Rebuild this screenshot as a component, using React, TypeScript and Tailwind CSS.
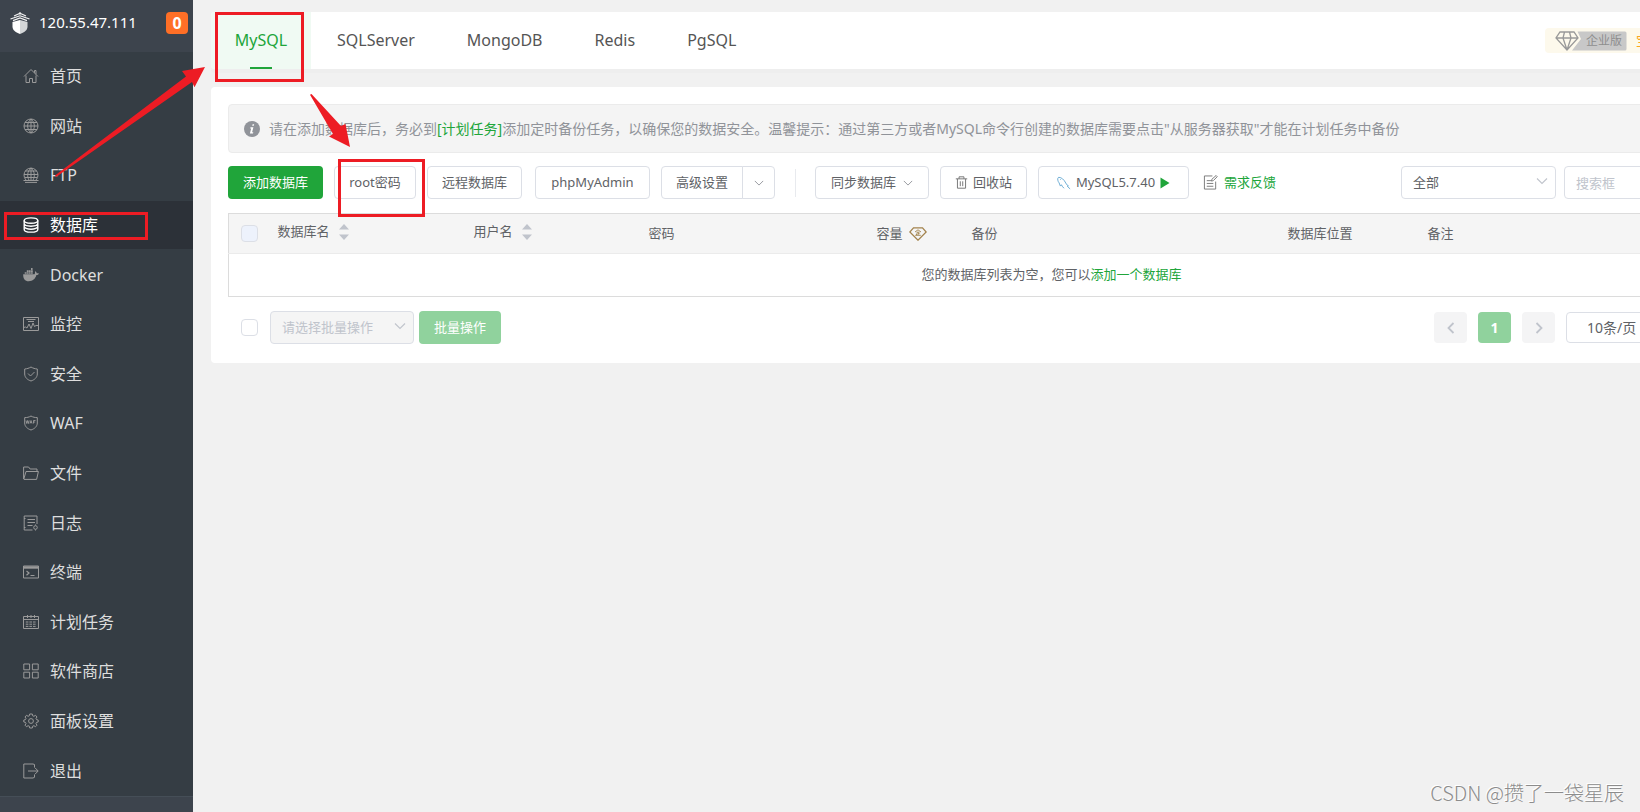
import React from "react";

type IconProps = { children: React.ReactNode; size?: string; color?: string };

function Icon({ children, size = "size-4", color = "text-[#9a9a9a]" }: IconProps) {
  return (
    <svg viewBox="0 0 16 16" className={`${size} ${color} shrink-0`} fill="none" stroke="currentColor" strokeWidth="1" aria-hidden="true">
      {children}
    </svg>
  );
}

const nav: { label: string; icon: React.ReactNode; active?: boolean }[] = [
  { label: "首页", icon: <path d="M1 8.5 8 1.5l7 7M11.5 4.8V2.5h1.5v3.8M3 7.5v7h3.5v-4h3v4H13v-7" /> },
  { label: "网站", icon: <><circle cx="8" cy="8" r="7" /><path d="M8 1v14M1 8h14M2 4.5h12M2 11.5h12" /><path d="M8 1C3.5 5 3.5 11 8 15M8 1c4.500 4 4.500 10 0 14" /></> },
  { label: "FTP", icon: <><path d="M3 13A7 7 0 1 1 13 13M8 .8v12.500M1 7.500h14M2.200 4h11.600M2 10.500h12M8 1C4 4.500 4 10 6 13M8 1c4 3.500 4 9 2 12" /><path d="M.5 13.500h15M2 15.400h12" /></> },
  { label: "数据库", active: true, icon: <g strokeWidth="1.400"><ellipse cx="8" cy="3.600" rx="6.800" ry="2.700" /><path d="M1.200 3.600v8.800c0 1.500 3 2.700 6.800 2.700s6.800-1.200 6.800-2.700V3.600M1.200 6.600C1.200 8 4.200 9.200 8 9.200s6.800-1.200 6.800-2.600M1.200 9.500c0 1.400 3 2.700 6.800 2.700s6.800-1.300 6.800-2.700" /></g> },
  { label: "Docker", icon: <path stroke="none" fill="currentColor" d="M.2 7.200h11.300c.5-.4.700-1.300.4-2.400l.6-.6c.8.600 1.200 1.300 1.200 2 .8-.1 1.600 0 2.200.400-.4 1.100-1.400 1.500-2.500 1.500C12.300 12 9.700 14.300 5.700 14.300 2 14.300 0 11.500.2 7.200ZM1.700 5.200h1.800v1.600H1.700zM3.800 5.200h1.800v1.600H3.800zM5.900 5.200h1.800v1.600H5.900zM8 5.200h1.800v1.600H8zM3.800 3.300h1.800v1.600H3.800zM5.900 3.300h1.800v1.600H5.900zM8 3.300h1.800v1.600H8zM8 1h1.600v2H8z" /> },
  { label: "监控", icon: <><path d="M.5 1.500h15v13H.5zM3.500 3.500h9M5 5.500h6" /><path d="m.5 11.500 2-.5 1.500 1L6 8l2 4.500L10 7l1.500 3.500 1.500-1h2" /></> },
  { label: "安全", icon: <><path d="M8 1c2 1.200 4 1.800 6.300 2v5c0 3.500-2.800 5.800-6.300 7-3.500-1.200-6.300-3.500-6.300-7V3C4 2.800 6 2.200 8 1Z" /><path d="m5 7.500 2.500 2.500 4-4" /></> },
  { label: "WAF", icon: <><path d="M8 1c2 1.200 4 1.600 6.300 1.600V8c0 3.500-2.800 5.800-6.300 7-3.500-1.200-6.300-3.500-6.300-7V2.600C4 2.600 6 2.200 8 1Z" /><path strokeWidth=".9" d="m3 5.500.8 3 .8-3 .8 3 .8-3M7 8.500l1-3 1 3M7.300 7.500h1.400M10.500 8.500v-3h2M10.500 7h1.700" /></> },
  { label: "文件", icon: <><path d="M.6 14V2h5l1.500 2H14v2" /><path d="M.8 14 3 6.500h12.400L13.600 14.400H.8" /></> },
  { label: "日志", icon: <><path d="M14 9V1H1.200v14h8.300M1 3.500h1.500M1 12.500h1.500M4.500 4.500H12M4.500 7.500H12M4.500 10.500h5" /><circle cx="12.500" cy="12.500" r="1.800" /><path d="M12.500 9.500v1M12.500 14.500v1" /></> },
  { label: "终端", icon: <><path d="M.5 2h15v12H.5z" /><path d="M.5 3.500h15" strokeWidth="2.400" /><path strokeWidth="1.200" d="m3.500 7 2.500 2-2.500 2.300M7.500 11.500h4" /></> },
  { label: "计划任务", icon: <><path d="M.5 2.500h15v12H.5zM.5 5.500h15M4.500 1v3M8 1v3M11.500 1v3" /><path strokeDasharray="2.600 1" d="M2.800 8h10.800M2.800 10.200h10.800M2.800 12.400h10.800" /></> },
  { label: "软件商店", icon: <path d="M.8 1h5.800v5.800H.8zM9.400 1h5.800v5.800H9.400zM.8 9.200h5.800V15H.8zM9.400 9.200h5.800V15H9.400z" /> },
  { label: "面板设置", icon: <><circle cx="8" cy="8" r="2.400" /><path strokeLinejoin="round" d="m6.700 1-.4 1.800-1.200.5-1.600-1L2 4l1 1.400-.5 1.200L.8 7v2l1.700.4.5 1.200L2 12.200l1.500 1.500 1.600-1 1.200.5.4 1.800h2.600l.4-1.800 1.200-.5 1.600 1 1.500-1.500-1-1.600.5-1.200 1.700-.4V7l-1.700-.4-.5-1.200L14 4l-1.500-1.700-1.600 1-1.200-.5L9.300 1z" /></> },
  { label: "退出", icon: <><path d="M11.500 4.500v-3L10 1H.8v14H10l1.500-.7v-2.800" /><path d="M5 8h10M12 4.800 15.200 8 12 11.200" /></> },
];

const tabs = ["MySQL", "SQLServer", "MongoDB", "Redis", "PgSQL"];

function Chevron({ className = "size-[10px] text-[#909399]" }: { className?: string }) {
  return (
    <svg viewBox="0 0 12 12" className={`${className} shrink-0`} fill="none" stroke="currentColor" strokeWidth="1.100" aria-hidden="true">
      <path d="m1 3.500 5 5 5-5" />
    </svg>
  );
}

function SortArrows() {
  return (
    <svg viewBox="0 0 12 16" className="h-4 w-3" fill="#c0c4cc" aria-hidden="true">
      <path d="M6 0l5 5.500H1zM6 16l5-5.500H1z" />
    </svg>
  );
}

const btn = "h-[33px] shrink-0 rounded border border-[#dcdfe6] bg-white text-[13px] text-[#606266] flex items-center justify-center";

function Sidebar() {
  return (
    <aside className="flex h-screen w-[193px] shrink-0 flex-col bg-[#353d44]">
      <div className="flex h-[52px] items-start bg-[#3d444d] pt-3 pr-[5px] pl-[10px]">
        <svg viewBox="0 0 20 22" className="h-[22px] w-5" aria-hidden="true">
          <path d="M10 0v2.500M10 1.200 4 4M10 1.200l6 2.800M10 3.800.500 7M10 3.800l9.500 3.200M3 8.600 10 6l7 2.600" fill="none" stroke="#f2f2f2" strokeWidth="1.200" />
          <path d="M2.500 10 10 8V22C5 20 2.500 18 2.500 14.500z" fill="#fff" />
          <path d="M17.500 10 10 8V22c5-2 7.500-4 7.500-7.500z" fill="#d4d6d8" />
        </svg>
        <span className="ml-[9px] text-[15px] leading-5 text-white">120.55.47.111</span>
        <span className="ml-auto flex size-[22px] items-center justify-center rounded bg-[#ff6f26] text-[16px] font-bold text-white">0</span>
      </div>
      <nav className="flex min-h-0 flex-1 flex-col">
        {nav.map((n) => (
          <a
            key={n.label}
            href="#"
            className={`mb-px flex flex-1 items-center gap-[11px] pl-[23px] text-[16px] ${n.active ? "bg-[#2c3138] text-white" : "text-[#dedede]"}`}
          >
            <Icon color={n.active ? "text-white" : "text-[#9a9a9a]"}>{n.icon}</Icon>
            {n.label}
          </a>
        ))}
      </nav>
      <div className="h-4 border-t border-[#454e57] bg-[#3d444d]" />
    </aside>
  );
}

function TabBar() {
  return (
    <div className="flex h-[57px] items-center rounded bg-white shadow-[0_4px_0_#eeeeee]">
      {tabs.map((t, i) =>
        i === 0 ? (
          <button key={t} className="relative h-full w-[100px] rounded-l bg-[#f0faf3] pb-[2px] text-[16px] text-[#20a53a]">
            {t}
            <span className="absolute bottom-0 left-1/2 h-[2px] w-[22px] -translate-x-1/2 bg-[#20a53a]" />
          </button>
        ) : (
          <button key={t} className="h-full px-[26px] pb-[2px] text-[16px] text-[#555]">
            {t}
          </button>
        ),
      )}
      <div className="ml-auto flex h-[25px] w-[347px] items-center rounded bg-[#fdf9ec] pl-[10px]">
        <div className="relative h-5 w-[72px]">
          <svg viewBox="0 0 72 20" className="h-5 w-[72px]" fill="none" aria-hidden="true">
            <path d="M22.500.500H70a1.500 1.500 0 0 1 1.500 1.500v16a1.500 1.500 0 0 1-1.500 1.500H17L26 8z" fill="#c8c8c8" />
            <path d="M5 1h14l4 6-11 12L1 7zM1 7h22M8 7l4 12 4-12M9.500 1 8 7M14.500 1 16 7" stroke="#999" strokeWidth="1.300" />
          </svg>
          <span className="absolute top-0 left-[31px] text-[12px] leading-5 text-[#8e8e8e]">企业版</span>
        </div>
        <span className="ml-[9px] text-[13px] text-[#fba81e]">宝</span>
      </div>
    </div>
  );
}

function Toolbar() {
  return (
    <div className="mt-[13px] flex items-center">
      <button className="h-[33px] w-[95px] shrink-0 rounded bg-[#20a53a] text-[13px] text-white">添加数据库</button>
      <button className={`${btn} ml-[11px] w-[82px]`}>root密码</button>
      <button className={`${btn} ml-[11px] w-[95px]`}>远程数据库</button>
      <button className={`${btn} ml-[13px] w-[115px]`}>phpMyAdmin</button>
      <div className="ml-[11px] flex">
        <button className={`${btn} w-[82px] rounded-r-none`}>高级设置</button>
        <button aria-label="更多" className={`${btn} -ml-px w-[33px] rounded-l-none`}><Chevron /></button>
      </div>
      <span className="ml-5 h-7 w-px bg-[#e8eaee]" />
      <button className={`${btn} ml-[19px] w-[114px] gap-[7px]`}>同步数据库<Chevron /></button>
      <button className={`${btn} ml-[11px] w-[87px] gap-[5px]`}>
        <Icon size="size-[13px]" color="text-[#777]">
          <path strokeWidth="1.200" d="M1 3.500h14M5 3.500V1h6v2.500M3 3.500V15h10V3.500M6.500 6.500v6M9.500 6.500v6" />
        </Icon>
        回收站
      </button>
      <button className={`${btn} ml-[11px] w-[151px] gap-[5px]`}>
        <Icon size="size-[14px]" color="text-[#5ba3cf]">
          <path d="M1.500 6.500C.5 4 .5 2 2 1.500c3 0 6 2.500 8 6.500.5 1.500 1.500 2.500 3 3.200l-1.200.6 3.200 3M1.500 6.500C3 8 3 10.500 4 11.500l1-1.500c1.200 1.500 1.500 3 3 4M3.500 3.500l.8.800" />
        </Icon>
        MySQL5.7.40
        <svg viewBox="0 0 10 12" className="h-3 w-[10px]" fill="#20a53a" aria-hidden="true"><path d="M.5.500v11L9.500 6z" /></svg>
      </button>
      <a href="#" className="ml-[14px] flex items-center gap-[6px] text-[13px] text-[#20a53a]">
        <Icon size="size-[15px]" color="text-[#777]">
          <path d="M10 1H1.500v14h12V7M4 6h4.500M4 9h7M4 12h7M9 6.500l.5-2L14 .5l1.200 1.300L11 6z" />
        </Icon>
        需求反馈
      </a>
      <div className="ml-auto flex w-[474px] gap-2">
        <div className="relative w-[155px] shrink-0">
          <select aria-label="数据库位置" className="h-[33px] w-full appearance-none rounded border border-[#dcdfe6] bg-white pl-[11px] text-[13px] text-[#606266]">
            <option>全部</option>
          </select>
          <Chevron className="pointer-events-none absolute top-[9px] right-2 size-3 text-[#c0c4cc]" />
        </div>
        <input aria-label="搜索" placeholder="搜索框" className="h-[33px] min-w-0 flex-1 rounded border border-[#dcdfe6] px-[11px] text-[13px] placeholder:text-[#c0c4cc]" />
      </div>
    </div>
  );
}

function DatabaseTable() {
  return (
    <table className="mt-[14px] w-full table-fixed border-collapse border border-[#dcdcdc] text-[13px] text-[#606266]">
      <colgroup>
        <col className="w-[40px]" />
        <col className="w-[196px]" />
        <col className="w-[175px]" />
        <col className="w-[228px]" />
        <col className="w-[95px]" />
        <col className="w-[316px]" />
        <col className="w-[140px]" />
        <col />
      </colgroup>
      <thead>
        <tr className="h-10 border-b border-[#ebebeb] bg-[#f5f5f5] text-left">
          <th className="pl-3">
            <input type="checkbox" disabled aria-label="全选" className="block size-[17px] appearance-none rounded-sm border border-[#dcdfe6] bg-[#edf2fc]" />
          </th>
          <th className="pl-[9px] font-normal"><span className="flex items-center gap-2 pb-1">数据库名<SortArrows /></span></th>
          <th className="pl-[9px] font-normal"><span className="flex items-center gap-2 pb-1">用户名<SortArrows /></span></th>
          <th className="pl-[9px] font-normal">密码</th>
          <th className="pl-[9px] font-normal">
            <span className="flex items-center gap-[6px]">
              容量
              <svg viewBox="0 0 18 14" className="h-[14px] w-[18px]" fill="none" stroke="#a3834d" strokeWidth="1.300" aria-hidden="true">
                <path d="M4.500.8h9L17.200 5 9 13.200.8 5z" />
                <path strokeWidth=".9" d="M6 5 9 2.800 12 5M7.500 5.200h3M9 5v3M7.500 6.500v1.700M6.200 8.300h5.600M9 6.600h1.600" />
              </svg>
            </span>
          </th>
          <th className="pl-[9px] font-normal">备份</th>
          <th className="pl-[9px] font-normal">数据库位置</th>
          <th className="pl-[9px] font-normal">备注</th>
        </tr>
      </thead>
      <tbody>
        <tr className="h-[43px]">
          <td colSpan={8} className="text-center">
            您的数据库列表为空，您可以<a href="#" className="text-[#20a53a]">添加一个数据库</a>
          </td>
        </tr>
      </tbody>
    </table>
  );
}

function Footer() {
  return (
    <div className="mt-[14px] flex items-center pl-[13px]">
      <input type="checkbox" aria-label="选择全部" className="size-[17px] appearance-none rounded-sm border border-[#dcdfe6] bg-white" />
      <div className="relative ml-3 w-[144px]">
        <select disabled aria-label="批量操作" className="h-[33px] w-full appearance-none rounded border border-[#dcdfe6] bg-[#f5f5f5] pl-[11px] text-[13px] text-[#c0c4cc] opacity-100">
          <option>请选择批量操作</option>
        </select>
        <Chevron className="pointer-events-none absolute top-[9px] right-2 size-3 text-[#c0c4cc]" />
      </div>
      <button disabled className="ml-[5px] h-[33px] w-[82px] rounded bg-[#90d29d] text-[13px] text-white">批量操作</button>
      <div className="ml-auto flex w-[441px] gap-[11px]">
        <button disabled aria-label="上一页" className="flex h-[31px] w-[33px] items-center justify-center rounded-sm bg-[#f4f4f5]">
          <svg viewBox="0 0 8 12" className="h-3 w-2" fill="none" stroke="#c0c4cc" strokeWidth="1.800"><path d="M6.500 1 1.500 6l5 5" /></svg>
        </button>
        <button className="h-[31px] w-[33px] rounded-sm bg-[#90d29d] text-[14px] font-bold text-white">1</button>
        <button disabled aria-label="下一页" className="flex h-[31px] w-[33px] items-center justify-center rounded-sm bg-[#f4f4f5]">
          <svg viewBox="0 0 8 12" className="h-3 w-2" fill="none" stroke="#c0c4cc" strokeWidth="1.800"><path d="m1.500 1 5 5-5 5" /></svg>
        </button>
        <select aria-label="每页条数" className="h-[31px] flex-1 appearance-none rounded border border-[#dcdfe6] bg-white pl-5 text-[14px] text-[#606266]">
          <option>10条/页</option>
        </select>
      </div>
    </div>
  );
}

function Annotations() {
  return (
    <svg className="pointer-events-none absolute top-0 left-0 h-[260px] w-[440px]" viewBox="0 0 440 260" aria-hidden="true">
      <g fill="none" stroke="#ed1c24" strokeWidth="3">
        <rect x="216.500" y="13.500" width="86" height="67" />
        <rect x="5.500" y="213.500" width="141" height="25" />
        <rect x="339.500" y="160.500" width="84" height="55" />
      </g>
      <g fill="#ed1c24">
        <path d="M205 67 182 71l4 5.500L55 175.500l1 1.500L192 82l2.500 5.300z" />
        <path d="M350 147 345.500 124l-4.500 2L311.500 94l-1.500.8 23 39.200-4 2.500z" />
      </g>
    </svg>
  );
}

export default function App() {
  return (
    <div className="relative flex h-screen overflow-hidden bg-[#f1f1f1] font-['Noto_Sans','Noto_Sans_CJK_SC',sans-serif]">
      <Sidebar />
      <main className="min-w-0 flex-1 overflow-hidden pt-3 pl-[18px]">
        <div className="w-[calc(100%+252px)]">
          <TabBar />
          <section className="mt-[18px] rounded bg-white px-[17px] pt-[17px] pb-[19px]">
            <p className="flex h-[49px] items-center rounded border border-[#ebebeb] bg-[#f4f4f4] pl-[15px] text-[14px] text-[#909399]">
              <svg viewBox="0 0 16 16" className="mr-[9px] size-4" aria-hidden="true">
                <circle cx="8" cy="8" r="8" fill="#909399" />
                <path d="M8.600 3.200h1.600l-.4 1.600H8.200zM6.500 6.300h2.900l-1.300 5h1.200l-.3 1.200H5.900l1.300-5H6.200z" fill="#fff" />
              </svg>
              <span>
                请在添加数据库后，务必到<a href="#" className="text-[#20a53a]">[计划任务]</a>添加定时备份任务，以确保您的数据安全。温馨提示：通过第三方或者MySQL命令行创建的数据库需要点击"从服务器获取"才能在计划任务中备份
              </span>
            </p>
            <Toolbar />
            <DatabaseTable />
            <Footer />
          </section>
        </div>
      </main>
      <Annotations />
      <p className="absolute right-4 bottom-1 font-['Noto_Sans_CJK_SC',sans-serif] text-[20px] font-light text-[#8c8c8c] [text-shadow:-1px_-1px_0_#fff]">
        CSDN @攒了一袋星辰
      </p>
    </div>
  );
}
